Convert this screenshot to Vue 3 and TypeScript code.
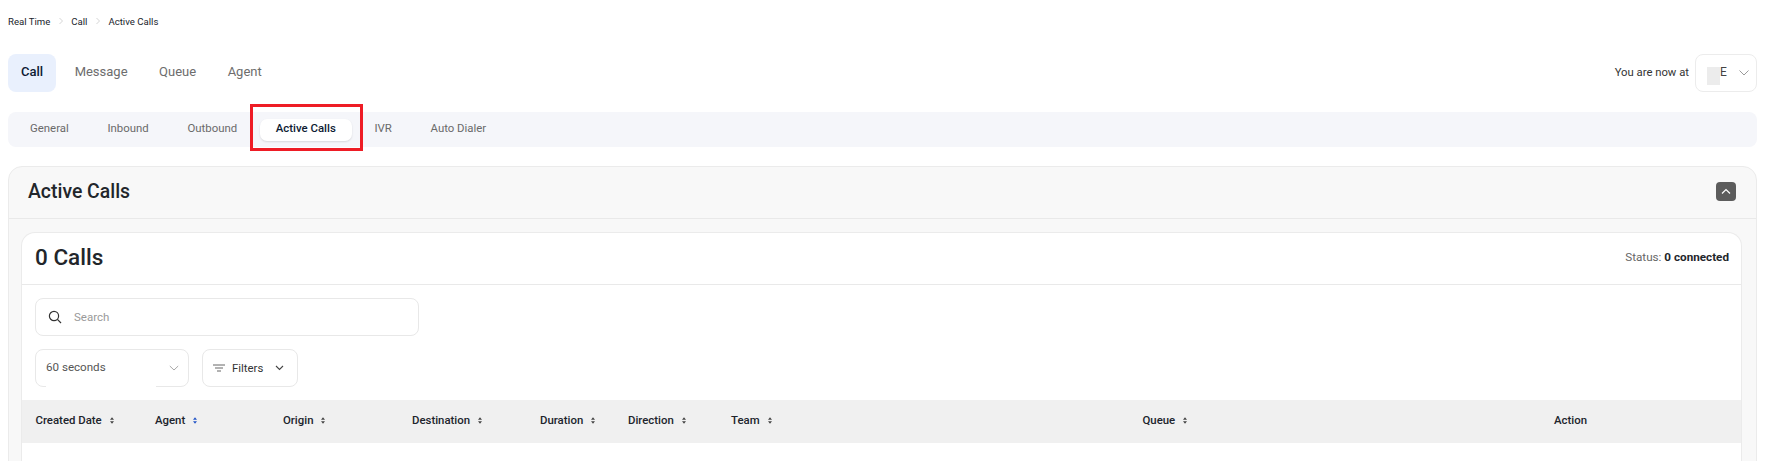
<script setup lang="ts">
interface Col { label: string; sort: boolean; active?: boolean }
const crumbs: string[] = ['Real Time', 'Call', 'Active Calls']
const mainTabs: string[] = ['Call', 'Message', 'Queue', 'Agent']
const subTabs: string[] = ['General', 'Inbound', 'Outbound', 'Active Calls', 'IVR', 'Auto Dialer']
const cols: Col[] = [
  { label: 'Created Date', sort: true },
  { label: 'Agent', sort: true, active: true },
  { label: 'Origin', sort: true },
  { label: 'Destination', sort: true },
  { label: 'Duration', sort: true },
  { label: 'Direction', sort: true },
  { label: 'Team', sort: true },
  { label: 'Queue', sort: true },
  { label: 'Action', sort: false },
]
</script>

<template>
  <div class="page">
    <nav class="crumbs">
      <template v-for="(c, i) in crumbs" :key="c">
        <span>{{ c }}</span>
        <svg v-if="i < crumbs.length - 1" class="sep" width="6" height="8" viewBox="0 0 6 8"><path d="M1.5 1l3 3-3 3" fill="none" stroke="#c9c9c9" stroke-width=".8" /></svg>
      </template>
    </nav>

    <div class="toprow">
      <div class="main-tabs">
        <span v-for="(t, i) in mainTabs" :key="t" class="main-tab" :class="{ on: i === 0 }">{{ t }}</span>
      </div>
      <div class="at">
        <span class="at-label">You are now at</span>
        <div class="picker">
          <span class="mask"></span>
          <span class="letter">E</span>
          <svg class="picker-chev" width="12" height="8" viewBox="0 0 12 8"><path d="M1.5 1.5L6 6l4.5-4.5" fill="none" stroke="#9a9a9a" stroke-width="1" /></svg>
        </div>
      </div>
    </div>

    <div class="sub-tabs">
      <span v-for="t in subTabs" :key="t" class="sub-tab" :class="{ on: t === 'Active Calls' }">{{ t }}</span>
      <span class="redbox"></span>
    </div>

    <section class="panel">
      <header class="panel-head">
        <h2>Active Calls</h2>
        <button class="toggle" type="button">
          <svg width="10" height="7" viewBox="0 0 10 7"><path d="M1 5.5l4-4 4 4" fill="none" stroke="#fff" stroke-width="1.2" /></svg>
        </button>
      </header>
      <div class="card">
        <div class="card-head">
          <h3>0 Calls</h3>
          <span class="status">Status: <b>0 connected</b></span>
        </div>
        <div class="controls">
          <div class="search">
            <svg width="14" height="14" viewBox="0 0 14 14"><circle cx="6" cy="6" r="4.6" fill="none" stroke="#333" stroke-width="1.2" /><path d="M9.4 9.4l3.6 3.6" stroke="#333" stroke-width="1.2" /></svg>
            <span>Search</span>
          </div>
          <div class="ctl-row">
            <div class="select">
              <span>60 seconds</span>
              <svg width="10" height="6" viewBox="0 0 10 6"><path d="M.8 1l4.2 4 4.2-4" fill="none" stroke="#a8a8a8" stroke-width="1" /></svg>
            </div>
            <div class="filters">
              <svg width="12" height="8" viewBox="0 0 12 8"><path d="M0 1h12M2 4h8M4 7h4" stroke="#666" stroke-width="1" /></svg>
              <span>Filters</span>
              <svg width="9" height="6" viewBox="0 0 9 6"><path d="M1 1l3.5 3.5L8 1" fill="none" stroke="#444" stroke-width="1.1" /></svg>
            </div>
          </div>
        </div>
        <div class="thead">
          <div v-for="c in cols" :key="c.label" class="th">
            <span>{{ c.label }}</span>
            <svg v-if="c.sort" width="4" height="7" viewBox="0 0 5 8" :fill="c.active ? '#2456c8' : '#444'"><path d="M2.5 0L5 3H0zM2.5 8L0 5h5z" /></svg>
          </div>
        </div>
      </div>
    </section>
  </div>
</template>

<style>
html, body { margin: 0; background: #fff; overflow: hidden; }
</style>

<style scoped>
.page {
  width: 1769px;
  height: 461px;
  overflow: hidden;
  box-sizing: border-box;
  padding: 14px 12px 0 8px;
  font-family: Roboto, "Liberation Sans", sans-serif;
  color: #1f2328;
}
.crumbs { display: flex; align-items: center; height: 14px; font-size: 9.6px; color: #20242c; }
.crumbs .sep { margin: 0 7.5px; }

.toprow { display: flex; justify-content: space-between; align-items: center; margin-top: 26px; height: 38px; }
.main-tabs { display: flex; gap: 5.5px; align-items: center; height: 100%; }
.main-tab { font-size: 13px; color: #6d6d6d; padding: 0 13px; line-height: 36px; padding-bottom: 2px; }
.main-tab.on { background: #e9f0fd; color: #0d1b33; font-weight: 500; border-radius: 8px; }
.at { display: flex; align-items: center; gap: 6px; }
.at-label { font-size: 11.3px; color: #333; margin-top: -1px; }
.picker {
  position: relative; box-sizing: border-box; width: 62px; height: 38px;
  border: 1px solid #ececec; border-radius: 8px; background: #fff;
  display: flex; align-items: center; font-size: 12px; color: #444;
}
.mask { position: absolute; left: 11px; top: 12px; width: 13px; height: 18px; background: #ececec; }
.letter { margin-left: 24px; margin-top: -2px; }
.picker-chev { margin-left: 11px; }

.sub-tabs {
  position: relative; display: flex; align-items: center; margin-top: 20px; height: 35px;
  background: #f5f6fa; border-radius: 8px; padding-left: 6px; font-size: 11.4px; color: #6a6a6a;
}
.sub-tab { padding: 0 16px 3px; line-height: 19px; margin-right: 6.7px; }
.sub-tab.on { background: #fff; color: #0d1b33; font-weight: 500; border-radius: 7px; box-shadow: 0 1px 2px rgba(0,0,0,.12); }
.redbox { position: absolute; left: 242px; top: -8px; width: 113px; height: 47px; box-sizing: border-box; border: 3px solid #ee1c25; }

.panel {
  margin-top: 19px; box-sizing: border-box; height: 320px;
  border: 1px solid #ebebeb; border-radius: 14px 14px 0 0; background: #f8f8f8; padding-bottom: 0;
}
.panel-head {
  display: flex; justify-content: space-between; align-items: center; box-sizing: border-box; height: 52px;
  padding: 0 20px 2px 19px; border-bottom: 1px solid #e9e9e9;
}
.panel-head h2 { margin: 0; font-size: 19.4px; font-weight: 500; color: #22262b; }
.toggle {
  width: 20px; height: 19px; padding: 0; border: 0; border-radius: 4px; background: #5c5c5c;
  display: flex; align-items: center; justify-content: center;
}
.card {
  margin: 13px 14px 0 12px; background: #fff; border: 1px solid #ebebeb; border-bottom: 0;
  border-radius: 14px 14px 0 0; height: 300px;
}
.card-head {
  display: flex; justify-content: space-between; align-items: center; box-sizing: border-box; height: 52px;
  padding: 0 12px 3px 13px; border-bottom: 1px solid #e9e9e9;
}
.card-head h3 { margin: 0; font-size: 22.5px; font-weight: 500; color: #22262b; }
.status { font-size: 11.7px; color: #666; }
.status b { color: #22262b; font-weight: 700; }
.controls { padding: 13px 13px; display: flex; flex-direction: column; gap: 13px; }
.search {
  box-sizing: border-box; width: 384px; height: 38px; border: 1px solid #e8e8e8; border-radius: 8px;
  display: flex; align-items: center; padding-left: 12px; gap: 12px; font-size: 11.5px; color: #9a9a9a;
}
.ctl-row { display: flex; gap: 13px; }
.select {
  position: relative; box-sizing: border-box; width: 154px; height: 38px; border: 1px solid #e8e8e8; border-radius: 8px;
  display: flex; align-items: center; justify-content: space-between; padding: 0 9px 0 10px; font-size: 11.6px; color: #555;
}
.select::after { content: ""; position: absolute; left: 10px; bottom: -1px; width: 110px; height: 2px; background: #fff; }
.select span { margin-top: -3px; }
.filters {
  box-sizing: border-box; width: 96px; height: 38px; border: 1px solid #e8e8e8; border-radius: 8px;
  display: flex; align-items: center; padding-left: 10px; gap: 7px; font-size: 11.4px; color: #333;
}
.filters svg:last-child { margin-left: 5px; }
.thead {
  display: grid; grid-template-columns: 119.5px 128px 129px 128px 88px 103px 411.5px 411.5px 1fr;
  align-items: center; box-sizing: border-box; height: 43px; padding: 0 0 3px 13.5px; background: #f0f0f0;
  font-size: 11.4px; font-weight: 500; color: #20242c;
}
.th { display: flex; align-items: center; gap: 8px; }
</style>
